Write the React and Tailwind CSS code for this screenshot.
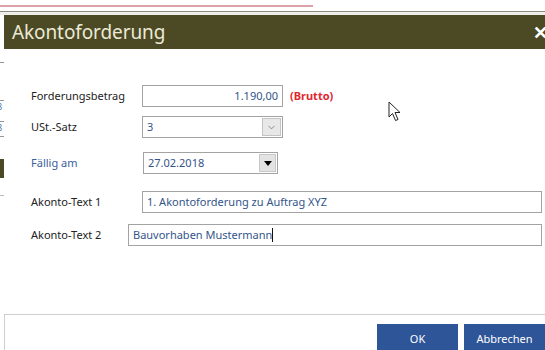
import { ChevronDown } from 'lucide-react';

const LABEL = 'text-[11px] text-[#222]';
const INPUT = 'h-[22px] border border-[#a3a3a3] bg-white px-[4px] text-[11px] text-[#33558a] flex items-center';

function Cursor() {
  return (
    <svg className="absolute left-[388px] top-[101px]" width="14" height="21" viewBox="0 0 14 21">
      <path d="M1 1 L1 16 L4.5 12.5 L7.5 19.5 L10 18.5 L7 11.5 L12 11.5 Z" fill="white" stroke="#222" strokeWidth="1" strokeLinejoin="round" />
    </svg>
  );
}

export default function App() {
  return (
    <div className="relative w-[545px] h-[350px] overflow-hidden bg-white font-['Noto_Sans','Open_Sans',sans-serif]">
      {/* page behind the dialog */}
      <div className="h-[5px]" />
      <div className="h-[2px] w-[313px] bg-[#dba3a8]" />
      <div className="h-[4px]" />
      <div className="h-[1px] bg-[#8c8c82]" />
      <div className="h-[3px] bg-[#efefe9]" />

      <div className="flex h-[335px]">
        {/* strip of underlying page */}
        <div className="w-[4px] shrink-0 flex flex-col">
          <div className="h-[47px]" />
          <div className="h-[1px] bg-[#999]" />
          <div className="h-[37px]" />
          <div className="h-[1px] bg-[#999]" />
          <div className="h-[12px] text-[9px] leading-[12px] text-[#5577aa] -ml-[3px]">8</div>
          <div className="h-[8px]" />
          <div className="h-[1px] bg-[#999]" />
          <div className="h-[12px] text-[9px] leading-[12px] text-[#5577aa] -ml-[3px]">8</div>
          <div className="h-[2px]" />
          <div className="h-[1px] bg-[#999]" />
          <div className="h-[22px]" />
          <div className="h-[19px] bg-[#4b4a24]" />
          <div className="h-[17px]" />
          <div className="h-[1px] bg-[#bbb]" />
        </div>

        {/* dialog */}
        <div className="flex-1 flex flex-col">
          <div className="h-[34px] bg-[#4b4a24] flex items-center justify-between pl-[8px]">
            <span className="text-[19px] text-[#ece9d6] tracking-[-0.1px]">Akontoforderung</span>
            <span className="text-[18px] font-bold text-white -mr-[3px]">✕</span>
          </div>

          <div className="flex-1 pl-[27px] pr-[3px] pt-[36px]">
            <div className="flex items-center">
              <div className={`${LABEL} w-[111px]`}>Forderungsbetrag</div>
              <div className={`${INPUT} w-[141px] justify-end`}>1.190,00</div>
              <div className="ml-[7px] text-[11px] font-bold text-[#e0262e]">(Brutto)</div>
            </div>

            <div className="flex items-center mt-[9px]">
              <div className={`${LABEL} w-[111px]`}>USt.-Satz</div>
              <div className={`${INPUT} w-[141px] justify-between pr-[1px]`}>
                <span>3</span>
                <span className="h-[18px] w-[19px] bg-[#e8e8e8] border border-[#c4c4c4] flex items-center justify-center">
                  <ChevronDown size={11} strokeWidth={1.5} color="#666" />
                </span>
              </div>
            </div>

            <div className="flex items-center mt-[14px]">
              <div className="text-[11px] text-[#3c5d9c] w-[112px]">Fällig am</div>
              <div className={`${INPUT} w-[135px] justify-between pr-[1px]`}>
                <span>27.02.2018</span>
                <span className="h-[18px] w-[17px] bg-[#e3e3e3] border border-[#c8c8c8] flex items-center justify-center">
                  <span className="w-0 h-0 border-l-[4px] border-r-[4px] border-t-[5px] border-l-transparent border-r-transparent border-t-black" />
                </span>
              </div>
            </div>

            <div className="flex items-center mt-[17px]">
              <div className={`${LABEL} w-[111px]`}>Akonto-Text 1</div>
              <div className={`${INPUT} flex-1`}>1. Akontoforderung zu Auftrag XYZ</div>
            </div>

            <div className="flex items-center mt-[11px]">
              <div className={`${LABEL} w-[97px]`}>Akonto-Text 2</div>
              <div className={`${INPUT} flex-1 border-[#6fa6d6]`}>
                Bauvorhaben Mustermann<span className="inline-block w-[1px] h-[14px] bg-[#111]" />
              </div>
            </div>
          </div>

          <div className="h-[36px] border-t border-l border-[#cfcfcf] flex justify-end gap-[6px] pt-[9px] -mr-[20px]">
            <button className="w-[81px] h-[30px] bg-[#2e5597] text-white text-[11px]">OK</button>
            <button className="w-[101px] h-[30px] bg-[#2e5597] text-white text-[11px] pr-[20px]">Abbrechen</button>
          </div>
        </div>
      </div>

      <Cursor />
    </div>
  );
}
